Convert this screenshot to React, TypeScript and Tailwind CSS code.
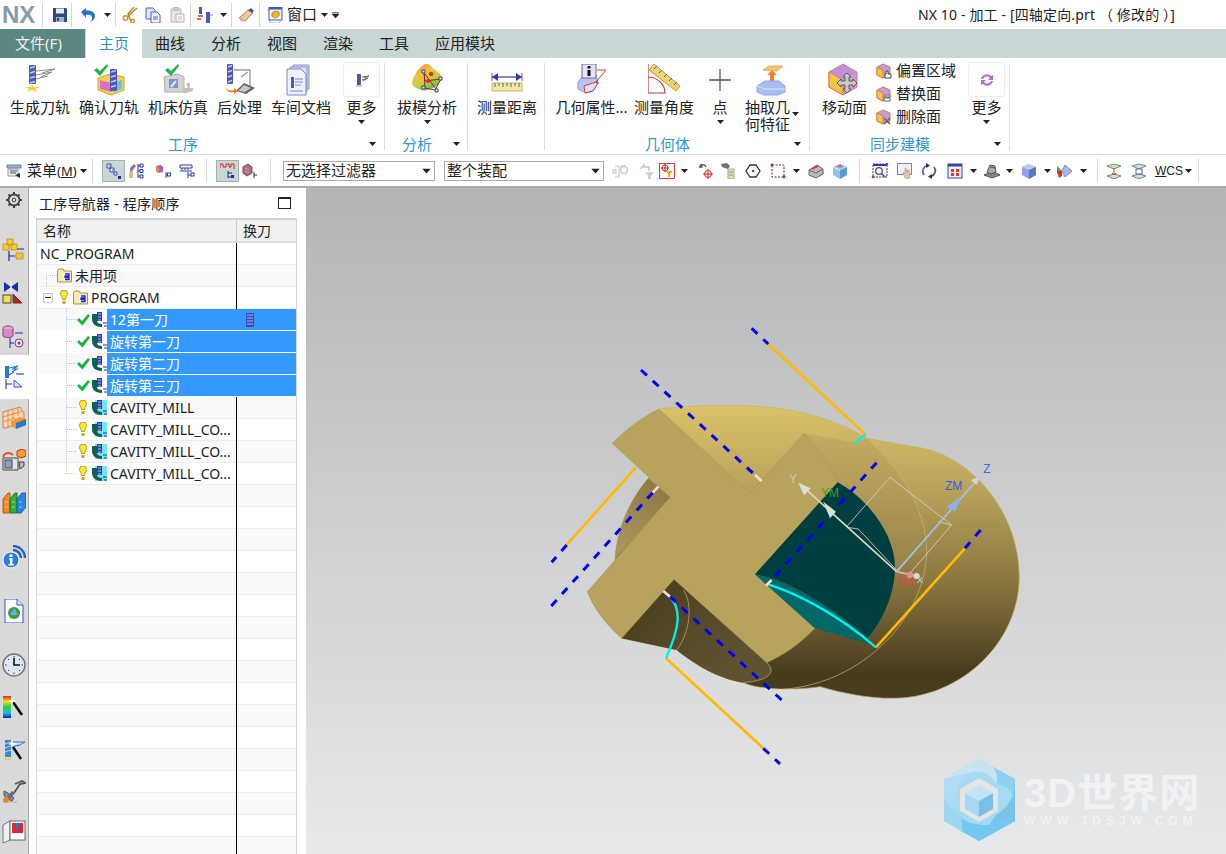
import type { ReactNode } from "react";

const Caret = ({ className = "" }: { className?: string }) => (
  <svg width="7" height="4" viewBox="0 0 7 4" className={"shrink-0 " + className}>
    <path d="M0 0h7L3.5 4z" fill="#222" />
  </svg>
);

const Sep = ({ className = "" }: { className?: string }) => (
  <div className={"w-px h-[24px] bg-[#d6d6d6] shrink-0 " + className} />
);

const S = ({ children }: { children: ReactNode }) => (
  <svg width="16" height="16" viewBox="0 0 16 16" className="shrink-0 block">
    {children}
  </svg>
);

const R = ({ children }: { children: ReactNode }) => (
  <svg width="32" height="32" viewBox="0 0 32 32" className="shrink-0">
    {children}
  </svg>
);

const L = ({ children }: { children: ReactNode }) => (
  <svg width="24" height="24" viewBox="0 0 24 24" className="shrink-0 block">
    {children}
  </svg>
);

// end mill, used all over the ribbon
const Bit = ({ x, y, w = 7, h = 20 }: { x: number; y: number; w?: number; h?: number }) => (
  <g>
    <rect x={x} y={y} width={w} height={h} rx="1" fill="#4d57c0" />
    <path d={`M${x + 1} ${y + 3}l${w - 2} -1.5M${x + 1} ${y + 8}l${w - 2} -1.5M${x + 1} ${y + 13}l${w - 2} -1.5M${x + 1} ${y + 18}l${w - 2} -1.5`} stroke="#c4cbf2" strokeWidth="1.4" />
  </g>
);

const Check = ({ x = 0, y = 0 }: { x?: number; y?: number }) => (
  <path transform={`translate(${x} ${y})`} d="M0 6l3-2 3 3 7-7 1 2-8 10z" fill="#22b34a" />
);

// ribbon icons
const GenPath = () => (
  <R>
    <Bit x={5} y={1} w={7} h={19} />
    <path d="M12 7L31 5 18 9M12 11L28 8 17 13M12 15L24 12" stroke="#8c8c8c" fill="none" />
    <path d="M8 20l1.500 3 6 0-4 2 1.500 3-5-2-5 2 2-3-4-2h6z" fill="#f2d23c" />
  </R>
);
const Confirm = () => (
  <R>
    <path d="M5 14l12-4 14 3v13l-13 5-13-5z" fill="#f2d24a" stroke="#c9a93a" />
    <path d="M7 16l11 3v9l-11-3z" fill="#e06fc0" />
    <path d="M20 19l9-3v9l-9 3z" fill="#6ac0e8" />
    <Bit x={17} y={5} w={7} h={22} />
    <Check x={1} y={0} />
  </R>
);
const Machine = () => (
  <R>
    <path d="M2 13l14-3 6 3v15H3z" fill="#d3d3cf" stroke="#b0b0ac" />
    <rect x="7" y="15" width="9" height="9" fill="#7f93d2" />
    <path d="M9 23l5-6" stroke="#dfe6fa" strokeWidth="2" />
    <path d="M22 24h9v3l-7 2h-2zM24 19h4v5h-2z" fill="#c0c0bc" />
    <Check x={3} y={0} />
  </R>
);
const Post = () => (
  <R>
    <Bit x={3} y={0} w={6} h={20} />
    <path d="M10 6h16v16M24 8l-7 5" stroke="#9b9b9b" fill="none" strokeWidth="1.4" />
    <path d="M12 27l8-8 11 5-9 6z" fill="#5c6068" />
    <path d="M14 27l6-6 7 3-6 4z" fill="#c9c9c9" />
    <path d="M1 23c2 4 6 4 9 3v-2l4 3-4 3v-2c-4 1-8-1-9-5z" fill="#f0782a" />
  </R>
);
const Doc = () => (
  <R>
    <path d="M8 1h16v24H8z" fill="#cfd3f0" stroke="#8d94cc" />
    <path d="M5 3h17v25H5z" fill="#dfe2f6" stroke="#8d94cc" />
    <path d="M2 5h14l5 5v21H2z" fill="#eef0fb" stroke="#7e86c4" />
    <rect x="6" y="13" width="3" height="11" fill="#4d57c0" />
    <path d="M10 15h8M10 18h8M10 21h6M5 27h13" stroke="#7e86c4" />
  </R>
);
const MoreTool = () => (
  <svg width="16" height="16" viewBox="0 0 16 16">
    <rect x="3" y="2" width="4" height="11" fill="#555b84" />
    <path d="M8 5l7-1-5 2M8 8l6-2-5 3" stroke="#666" fill="none" />
    <path d="M2 14h6" stroke="#999" />
  </svg>
);
const Draft = () => (
  <R>
    <defs>
      <linearGradient id="draftg" x1="0.2" y1="0" x2="0.8" y2="1">
        <stop offset="0" stopColor="#f08a3a" />
        <stop offset="0.3" stopColor="#f0c23c" />
        <stop offset="0.6" stopColor="#c8d040" />
        <stop offset="1" stopColor="#3fb54a" />
      </linearGradient>
    </defs>
    <path d="M14 0c5-1 6 3 10 6 4 3 7 4 6 9-1 4-4 7-8 9-4 2-8 3-12 2C5 24 1 22 1 19 2 12 8 3 14 0z" fill="url(#draftg)" />
    <path d="M13 8l1 16 10 2 6-11-16 2-1-9zM14 10l11 15" stroke="#a0202c" fill="none" />
    <circle cx="20" cy="10" r="2.200" fill="#e02b2b" />
    <circle cx="17" cy="17" r="2" fill="#e02b2b" />
    <path d="M11 6h3v3h-3zM28 13h3v3h-3zM11 22h3v3h-3zM24 25h3v3h-3z" fill="#f6ef9c" stroke="#4a3a8c" />
  </R>
);
const Distance = () => (
  <R>
    <path d="M1 9v8M31 9v8" stroke="#c23a3a" />
    <path d="M1 13h30" stroke="#2f3aa8" strokeWidth="1.2" />
    <path d="M1 13l6-4v8zM31 13l-6-4v8z" fill="#2f3aa8" />
    <rect x="1" y="19" width="30" height="8" fill="#f4e7a0" stroke="#c9b95e" />
    <path d="M4 19v4M8 19v3M12 19v4M16 19v3M20 19v4M24 19v3M28 19v4" stroke="#5558b8" />
  </R>
);
const GeoInfo = () => (
  <R>
    <path d="M2 18l6-7h12l2 8-5 8-7 2-8-4z" fill="#b8c6ef" stroke="#8d9fd6" />
    <path d="M8 22l12-4 2 1-5 8-8 2z" fill="#d9e2fa" stroke="#d23a3a" />
    <rect x="6" y="0" width="14" height="14" fill="#e4e4f4" stroke="#6a6aa0" />
    <rect x="11.5" y="2" width="3" height="2.5" fill="#111" />
    <rect x="11.5" y="6" width="3" height="6" fill="#111" />
    <path d="M21 6h9l-10 12M22 16l-2 3 3 0" stroke="#d23a3a" fill="none" />
  </R>
);
const Angle = () => (
  <R>
    <path d="M6 0l26 22-4 5L1 6l3-4z" fill="#eed66c" stroke="#b79a3a" />
    <path d="M6 5l3-3M11 9l3-3M16 13l3-3M21 17l3-3M26 21l3-3" stroke="#4d57c0" />
    <path d="M0 0v29h17c0-9-8-16-17-16" stroke="#b84040" fill="none" strokeWidth="1.2" />
  </R>
);
const Plus = () => (
  <svg width="24" height="24" viewBox="0 0 24 24" className="shrink-0">
    <path d="M12 1v22M1 12h22" stroke="#555" strokeWidth="1.3" />
  </svg>
);
const Extract = () => (
  <R>
    <path d="M7 6l6-4h14l-6 5z" fill="#f5c67a" stroke="#e0b260" />
    <path d="M14 18v-7h-3l5-5 5 5h-3v7z" fill="#f0832a" />
    <path d="M1 22l8-5h14l6 5v6l-7 3H8l-7-3z" fill="#a9bdf2" stroke="#8fa5e0" />
    <path d="M1 22l8 3h20" stroke="#dce6ff" fill="none" />
  </R>
);
const MoveFace = () => (
  <svg width="34" height="34" viewBox="0 0 34 34" className="shrink-0">
    <path d="M15 1l14 8v15L15 32 1 24V9z" fill="#c79ad9" stroke="#e8734a" />
    <path d="M1 9l14 8v15L1 24z" fill="#f3c742" stroke="#e8734a" />
    <path d="M15 1l14 8-14 8L1 9z" fill="#c08fd8" />
    <path d="M19 10l4 4h-2v4h4v-2l4 4-4 4v-2h-4v4h2l-4 4-4-4h2v-4h-4v2l-4-4 4-4v2h4v-4h-2z" fill="#c9c9c9" stroke="#5a5a5a" />
  </svg>
);
const SmallFace = ({ kind }: { kind: number }) => (
  <S>
    <path d="M7 1l7 3v8l-7 3-6-3V4z" fill="#c79ad9" stroke="#d87a50" />
    <path d="M1 4l6 3v8l-6-3z" fill="#f3c742" stroke="#d87a50" />
    {kind === 0 && <path d="M10 8h2v3h3v4H9v-4h1z" fill="#fff" stroke="#444" />}
    {kind === 1 && <path d="M9 9h5v2H9zM8 12h6v3H8z" fill="#fff" stroke="#666" />}
    {kind === 2 && <path d="M8 9l6 6M14 9l-6 6" stroke="#666" strokeWidth="1.6" />}
  </S>
);
const Sync = () => (
  <svg width="16" height="16" viewBox="0 0 16 16">
    <path d="M2 7a6 6 0 0 1 10-3l2-1v5H9l2-2a4 4 0 0 0-7 1z" fill="#b26bd0" />
    <path d="M14 9a6 6 0 0 1-10 3l-2 1V8h5l-2 2a4 4 0 0 0 7-1z" fill="#b26bd0" />
  </svg>
);

// small toolbar icons
const Save = () => (
  <S>
    <path d="M1 1h13l1 1v13H1z" fill="#2d4a7c" />
    <rect x="4" y="1.5" width="8" height="5" fill="#e6edf7" />
    <rect x="4" y="10" width="8" height="5" fill="#9db2d4" />
    <rect x="5" y="11" width="2" height="3" fill="#2d4a7c" />
  </S>
);
const Undo = () => (
  <S>
    <path d="M1 5l5-4v2.500c5-.5 9 1.500 9 5.500 0 3-2 5-5 6 2-1.500 2.500-3 2-5-.6-2-3-2.500-6-2.200V11z" fill="#2670d2" />
  </S>
);
const Scissors = () => (
  <S>
    <path d="M15 1L5 10M12 0L6 7 9 14" stroke="#b08a2a" strokeWidth="1.5" fill="none" />
    <circle cx="3.5" cy="11" r="2.3" fill="none" stroke="#c69a2a" strokeWidth="1.5" />
    <circle cx="10.5" cy="14" r="1.8" fill="none" stroke="#c69a2a" strokeWidth="1.5" />
  </S>
);
const Copy = () => (
  <S>
    <path d="M1 1h7l2 2v9H1z" fill="#dfe6fa" stroke="#4e62b8" />
    <path d="M6 5h6l3 3v8H6z" fill="#f1f4ff" stroke="#4e62b8" />
    <path d="M8 10h5M8 12h5" stroke="#4e62b8" />
  </S>
);
const Paste = () => (
  <S>
    <path d="M2 2h10v13H2z" fill="#e6e6e6" stroke="#b8b8b8" />
    <rect x="5" y="0.5" width="4" height="3" fill="#d0d0d0" stroke="#b8b8b8" />
    <path d="M7 7h8v8H7z" fill="#f4f4f4" stroke="#b8b8b8" />
    <path d="M9 10h4M9 12h4" stroke="#c4c4c4" />
  </S>
);
const ToolTree = () => (
  <S>
    <rect x="2" y="0" width="3" height="7" fill="#4d57c0" />
    <path d="M1 9h5M0 12l4 0" stroke="#d33" strokeWidth="1.5" />
    <rect x="9" y="5" width="4" height="11" fill="#4d57c0" />
    <path d="M13 8h3" stroke="#888" />
  </S>
);
const Pencil = () => (
  <S>
    <path d="M1 11l9-8 5 3-8 8z" fill="#e9c79a" stroke="#a98a62" />
    <path d="M10 3l3-2 3 3-2 2z" fill="#3d4fb0" />
    <path d="M1 11l2 4 4-1z" fill="#d9b9d6" />
  </S>
);
const Win = () => (
  <S>
    <path d="M0 3h3v13h10v-2" stroke="#aaa" fill="none" />
    <rect x="2" y="0" width="13" height="13" fill="#eff3fb" stroke="#3a5dc0" />
    <path d="M2 0h13v2.500H2z" fill="#3a5dc0" />
    <path d="M5 6l3-2 4 1v4l-4 2-3-2z" fill="#f3b72e" stroke="#c98a20" />
  </S>
);
const MenuIc = () => (
  <S>
    <path d="M1 2h14v3H1z" fill="#9db4d8" stroke="#6c7fa6" />
    <path d="M2 6h10v7H2z" fill="#f1f1f1" stroke="#9a9a9a" />
    <path d="M4 8h7M4 10h6" stroke="#555" />
    <path d="M9 12l5 3v-5z" fill="#333" />
  </S>
);
const NavA = () => (
  <S>
    <path d="M1 1h4v4H1zM4 5h4v4H4zM8 9h3v3H8z" fill="#e8ecfa" stroke="#3a4aa8" />
    <path d="M3 3h1M6 7h1" stroke="#3a4aa8" />
    <path d="M12 13h3v3h-3z" fill="#1b2a9c" />
  </S>
);
const NavB = () => (
  <S>
    <path d="M2 5l4-4 2 2-4 5-2 3z" fill="#8a70c4" />
    <path d="M1 10l4-3v8H1z" fill="#d0c08a" />
    <path d="M10 1v14M10 3h3M10 8h3M10 13h3" stroke="#2a3aa8" />
    <path d="M12 1h3v3h-3zM12 6.500h3v3h-3zM12 12h3v3h-3z" fill="#e8ecfa" stroke="#2a3aa8" />
  </S>
);
const NavC = () => (
  <S>
    <path d="M1 3l5-1 2 2v5l-5 1-2-2z" fill="#a85bd0" />
    <path d="M1 3l3 2v5l-3-2z" fill="#ef8a3a" />
    <path d="M11 9v6M11 12h4" stroke="#2a3aa8" />
    <rect x="12.5" y="10" width="3" height="3" fill="#fff" stroke="#2a3aa8" />
  </S>
);
const NavD = () => (
  <S>
    <path d="M1 2h12M1 2v3h12V2M3 5v2M6 5v2M9 5v2M1 8h12" stroke="#2f3aa8" fill="none" />
    <path d="M9 9v6M9 12h4" stroke="#2a3aa8" />
    <rect x="12" y="10" width="3" height="3" fill="#fff" stroke="#2a3aa8" />
  </S>
);
const NavE = () => (
  <S>
    <path d="M0 5V1h3v3h3V1h3v3h2V1h3v5" stroke="#d02020" fill="none" />
    <path d="M8 8v7M8 10h4M8 14h4" stroke="#1b2a9c" />
    <rect x="11" y="12" width="3" height="3" fill="#1b2a9c" />
  </S>
);
const NavF = () => (
  <S>
    <path d="M1 4l5-3 4 3v6l-5 3-4-3z" fill="#a9707a" stroke="#7b4d55" />
    <path d="M3 5l4 2M3 8l4 2" stroke="#e0a0b0" />
    <path d="M12 9v6M12 12h3" stroke="#333" />
  </S>
);
const G1 = () => (
  <S>
    <rect x="1" y="7" width="3" height="3" fill="none" stroke="#bbb" />
    <path d="M3 3h4v11H3M8 3h6" stroke="#c6c6c6" fill="none" />
    <circle cx="12" cy="7" r="3.5" fill="none" stroke="#c6c6c6" strokeWidth="1.5" />
  </S>
);
const G2 = () => (
  <S>
    <path d="M1 6l4-4v2h5v4" stroke="#c6c6c6" fill="none" strokeWidth="1.5" />
    <path d="M6 9h9l-3 4v3h-3v-3z" fill="#d4d4d4" />
  </S>
);
const G3 = () => (
  <S>
    <rect x="0.5" y="0.5" width="15" height="15" fill="#fff" stroke="#d43a4a" />
    <circle cx="6" cy="5" r="3" fill="none" stroke="#b52a2a" />
    <path d="M6 1v8M2 5h8" stroke="#b52a2a" />
    <path d="M7 8h7l-3 3v3H9v-3z" fill="#eaa724" />
  </S>
);
const T1 = () => (
  <S>
    <path d="M1 4c2-3 6-3 7 0M1 4l3 0-1-3" stroke="#55565a" fill="none" strokeWidth="1.3" />
    <circle cx="10" cy="11" r="3.5" fill="none" stroke="#c22" />
    <path d="M10 6v10M5 11h10" stroke="#c22" />
  </S>
);
const T2 = () => (
  <S>
    <path d="M1 1l6-1 3 3-2 3-6-2z" fill="#6e7078" />
    <path d="M8 6h6v10H8z" fill="#e6dfae" stroke="#a8a890" />
    <path d="M9 9h4M9 12h4" stroke="#7b86b8" />
  </S>
);
const T3 = () => (
  <S>
    <path d="M5 2h6l4 6-4 6H5L1 8z" fill="#fff" stroke="#333" strokeWidth="1.3" />
    <circle cx="8" cy="8" r="1.3" fill="#c22" />
  </S>
);
const T4 = () => (
  <S>
    <path d="M2 2h12v12H2z" fill="none" stroke="#333" strokeDasharray="2 1.5" />
    <circle cx="2" cy="2" r="1.4" fill="#c22" />
    <circle cx="14" cy="14" r="1.4" fill="#c22" />
  </S>
);
const T5 = () => (
  <S>
    <path d="M1 7l8-5 6 4v5l-7 4-7-3z" fill="#b9b9b9" stroke="#666" />
    <path d="M1 7l7 3 7-4" stroke="#666" fill="none" />
    <path d="M4 6l6-3" stroke="#d43a3a" strokeWidth="1.4" />
  </S>
);
const T6 = () => (
  <S>
    <path d="M8 1l7 3v8l-7 4-7-4V4z" fill="#8ec4ee" />
    <path d="M1 4l7 3 7-3" stroke="#e8f4ff" fill="none" />
    <path d="M8 7v9l7-4V4z" fill="#5a9ad4" />
    <path d="M8 1v4M5 3l6 0" stroke="#e04a4a" />
  </S>
);
const V1 = () => (
  <S>
    <rect x="1" y="1" width="14" height="13" fill="#f1f4fb" stroke="#2f3aa8" strokeDasharray="2 1" />
    <path d="M1 1h14v2H1z" fill="#2f3aa8" />
    <circle cx="7" cy="8" r="3.3" fill="none" stroke="#555" strokeWidth="1.3" />
    <path d="M9.5 10.5L13 14" stroke="#555" strokeWidth="1.5" />
    <circle cx="1" cy="14" r="1.3" fill="#d22" />
    <circle cx="15" cy="1" r="1.3" fill="#d22" />
  </S>
);
const V2 = () => (
  <S>
    <rect x="0.5" y="0.5" width="14" height="11" fill="#eef1f8" stroke="#7d86ac" />
    <path d="M8 15l-2-5 1-1 1 2V5l1 0 0 4 1-3 1 3 1-2 1 3-1 6z" fill="#e9c49a" stroke="#b08f68" strokeWidth="0.5" />
  </S>
);
const V3 = () => (
  <S>
    <path d="M3 12A6 6 0 0 1 6 2.500" stroke="#4a6ac8" fill="none" strokeWidth="1.8" />
    <path d="M13 4a6 6 0 0 1-3 9.500" stroke="#5a5a5a" fill="none" strokeWidth="1.8" />
    <path d="M5 0v5l4-2.500zM11 16v-5l-4 2.500z" fill="#333" />
  </S>
);
const V4 = () => (
  <S>
    <rect x="1" y="1" width="14" height="14" fill="#f0f0f4" stroke="#2f4aa8" />
    <path d="M1 1h14v2.500H1z" fill="#2f4aa8" />
    <path d="M4 6h3v3H4zM9 6h3v3H9zM4 10h3v3H4zM9 10h3v3H9z" fill="#d83a3a" />
  </S>
);
const V5 = () => (
  <S>
    <path d="M0 12l8-4 8 4-8 3z" fill="#888" stroke="#555" />
    <path d="M3 9l3-7 5 1 1 6-5 2z" fill="#a9a9a9" stroke="#555" />
    <path d="M6 4l5 1" stroke="#555" />
  </S>
);
const V6 = () => (
  <S>
    <path d="M8 1l7 3v8l-7 4-7-4V4z" fill="#8ea6e6" />
    <path d="M1 4l7 3 7-3-7-3z" fill="#bccbf2" />
    <path d="M8 7v9l7-4V4z" fill="#5a76c4" />
  </S>
);
const V7 = () => (
  <S>
    <path d="M8 2l7 6-7 6-3-6z" fill="#aab6e4" stroke="#7d8ac4" />
    <path d="M0 3l5 5-5 3z" fill="#2bab4a" />
    <path d="M0 8l5 0v5l-3 2z" fill="#d43030" />
  </S>
);
const W1 = () => (
  <S>
    <path d="M1 3l7-2 7 2-7 3zM1 13l7-2 7 2-7 3z" fill="#cfe2c8" stroke="#6f8f6a" />
    <path d="M8 5v7M6 10l2 2 2-2" stroke="#d23a3a" fill="none" />
  </S>
);
const W2 = () => (
  <S>
    <path d="M1 3l7-2 7 2-7 3zM1 13l7-2 7 2-7 3z" fill="#cfe2d8" stroke="#6f8f80" />
    <rect x="5" y="6" width="6" height="5" fill="#fff" stroke="#4a6a90" />
  </S>
);

// side rail icons
const Rail = {
  gear: (
    <L>
      <circle cx="12" cy="12" r="5.5" fill="none" stroke="#444" strokeWidth="1.8" />
      <circle cx="12" cy="12" r="1.8" fill="none" stroke="#444" />
      <path d="M12 4v3M12 17v3M4 12h3M17 12h3M6.500 6.500l2 2M15.500 15.500l2 2M6.500 17.500l2-2M15.500 8.500l2-2" stroke="#444" strokeWidth="2" />
    </L>
  ),
  geo: (
    <L>
      <path d="M5 1h6v6H5zM1 6h6v6H1zM9 6h6v6H9z" fill="#f3cc3c" stroke="#c69a20" />
      <path d="M15 11h7M7 13v10M7 18h6" stroke="#1b2a9c" strokeWidth="1.2" />
      <path d="M14 15h7v6h-7z" fill="#f3c23c" stroke="#c69a20" />
    </L>
  ),
  tool: (
    <L>
      <path d="M2 1l7 5 7-5v10L9 6l-7 5z" fill="#1b2ab8" />
      <path d="M9 0v11" stroke="#fff" />
      <rect x="1" y="14" width="8" height="8" fill="#f3e14a" stroke="#444" />
      <path d="M11 22V13l9 9z" fill="#c41a1a" stroke="#444" />
    </L>
  ),
  db: (
    <L>
      <ellipse cx="6" cy="3.500" rx="5" ry="2.500" fill="#e8a6d2" stroke="#8c3a7a" />
      <path d="M1 4v7c1 2 9 2 10 0V4" fill="#d88ac4" stroke="#8c3a7a" />
      <path d="M13 8h8M8 13v10M8 18h4" stroke="#1b2a9c" />
      <circle cx="17" cy="18" r="4" fill="#f8e6ee" stroke="#8c3a7a" />
      <circle cx="17" cy="18" r="1.5" fill="#8c3a7a" />
    </L>
  ),
  ops: (
    <L>
      <rect x="3" y="1" width="4" height="12" fill="#2a75d8" />
      <path d="M7 3l9-2-5 3 4 0-5 3M7 10l5-3" stroke="#2a75d8" fill="none" strokeWidth="1.2" />
      <path d="M14 9h8M4 14v10M4 19h6" stroke="#1b2a9c" />
      <path d="M12 15v7h8z" fill="#dfe9ff" stroke="#2a5ac8" />
    </L>
  ),
  table: (
    <L>
      <path d="M1 6l17-5 4 6v8L4 22H1z" fill="#f5d6b8" stroke="#c9834a" />
      <path d="M1 11l20-6M1 16l12-4M6 4v17M11 3v10M16 2v8" stroke="#e88a4a" />
      <path d="M9 15l9-4 6 2v6l-10 4-5-3z" fill="#f09a2a" />
      <path d="M14 17l10-4v6l-10 4z" fill="#2a75d8" />
    </L>
  ),
  machine: (
    <L>
      <path d="M1 9h15v12H1z" fill="#e4e4e4" stroke="#444" />
      <rect x="3" y="11" width="7" height="8" fill="#8ea0c8" stroke="#444" />
      <path d="M17 13h5v4l-4 3z" fill="#bbb" stroke="#444" />
      <path d="M1 8C3 3 8 3 11 6" stroke="#e0562a" fill="none" strokeWidth="2" />
      <path d="M15 2l5-2 4 2v5l-5 2-4-2z" fill="#f3a02a" stroke="#c42a1a" />
    </L>
  ),
  books: (
    <L>
      <path d="M1 8l5-6h2v20H1z" fill="#f08a2a" stroke="#b85a10" />
      <path d="M8 8l5-6h2v20H8z" fill="#2fb03a" stroke="#1a7a24" />
      <path d="M15 8l5-6h4v14l-5 6h-4z" fill="#2a86e0" stroke="#1a5ab0" />
      <path d="M3 11h3M10 11h3M17 11h3M3 16h3M10 16h3M17 16h3" stroke="#fff" opacity="0.5" />
    </L>
  ),
  info: (
    <L>
      <path d="M11 1a12 12 0 0 1 12 12M11 5a8 8 0 0 1 8 8" stroke="#2a5ac8" fill="none" strokeWidth="2.4" />
      <circle cx="9" cy="15" r="8" fill="#2a7ee0" stroke="#fff" />
      <rect x="7.5" y="9.5" width="3" height="2.5" fill="#fff" />
      <path d="M7 13h3.500v6H12v1.500H6.500V19H8v-4.500H7z" fill="#fff" />
    </L>
  ),
  page: (
    <L>
      <path d="M3 0h12l6 6v18H3z" fill="#fff" stroke="#2a5ac8" />
      <path d="M15 0v6h6" fill="#dfe8fb" stroke="#2a5ac8" />
      <circle cx="12" cy="14" r="6" fill="#3f9a3f" />
      <path d="M12 9l4 7H8z" fill="#6ab0e8" />
    </L>
  ),
  clock: (
    <L>
      <circle cx="12" cy="12" r="11" fill="#dfe7f6" stroke="#777" strokeWidth="1.5" />
      <path d="M12 3v1.500M12 19.500v1.500M3 12h1.500M19.500 12h1.500M6 6l1 1M18 6l-1 1M6 18l1-1M18 18l-1-1" stroke="#333" />
      <path d="M12 5v7h6" stroke="#111" strokeWidth="1.6" fill="none" />
    </L>
  ),
  spectrum: (
    <L>
      <defs>
        <linearGradient id="specg" x1="0" y1="0" x2="0" y2="1">
          <stop offset="0" stopColor="#f02020" />
          <stop offset="0.25" stopColor="#f0e020" />
          <stop offset="0.5" stopColor="#20d040" />
          <stop offset="0.75" stopColor="#20c0e0" />
          <stop offset="1" stopColor="#1020d0" />
        </linearGradient>
      </defs>
      <rect x="1" y="1" width="8" height="22" fill="url(#specg)" />
      <path d="M11 7l9 13" stroke="#111" strokeWidth="2.6" />
      <path d="M10 1l1 4 4 1-4 1-1 3-1-3-3-1 3-1z" fill="#fff" />
    </L>
  ),
  wand: (
    <L>
      <rect x="3" y="2" width="6" height="17" fill="#3a86d8" />
      <path d="M3 6l6-2M3 10l6-2M3 14l6-2" stroke="#bcd6f6" />
      <path d="M9 4h14l-7 4M9 9l8-2" stroke="#2a75d8" fill="none" />
      <path d="M2 20h8l-2 2H3z" fill="#f2d23c" />
      <path d="M11 9l8 12" stroke="#111" strokeWidth="2.6" />
      <path d="M10 1l1 4 4 1-4 1-1 3-1-3-3-1 3-1z" fill="#fff" />
    </L>
  ),
  wrench: (
    <L>
      <path d="M13 4l7-3 3 2-5 1-6 9" stroke="#555" fill="none" strokeWidth="1.8" />
      <path d="M2 11l4 2 6 5-2 3-6-3-2-3z" fill="#8a8aa8" stroke="#555" />
      <path d="M10 11l3 2-5 6-3-2z" fill="#6a6a88" />
      <circle cx="4" cy="20" r="3" fill="#f0862a" />
      <path d="M6 22h9" stroke="#aaa" />
    </L>
  ),
  door: (
    <L>
      <path d="M1 5l7-4v19l-7 3z" fill="#f1f1f1" stroke="#777" />
      <rect x="8" y="1" width="15" height="19" fill="#fff" stroke="#666" />
      <rect x="10" y="3" width="11" height="10" fill="#d82a2a" />
      <path d="M13 3h5l-1 6h-3z" fill="#3a6ad0" />
    </L>
  ),
};

const RibbonItem = ({ icon, label, caret = false, box = false, className = "" }: { icon: ReactNode; label: ReactNode; caret?: boolean; box?: boolean; className?: string }) => (
  <div className={"flex flex-col items-center shrink-0 " + className}>
    {box ? (
      <div className="w-[37px] h-[35px] border border-[#ececec] rounded-[3px] flex items-center justify-center">{icon}</div>
    ) : (
      <div className="h-[35px] flex items-center justify-center">{icon}</div>
    )}
    <div className="h-[20px] leading-[20px] whitespace-nowrap">{label}</div>
    {caret && <Caret className="mt-[3px]" />}
  </div>
);

const GroupLabel = ({ text, className = "", caret = "" }: { text?: string; className?: string; caret?: string }) => (
  <div className="h-[20px] flex items-center">
    <span className={"text-[#2f97cc] leading-[20px] whitespace-nowrap " + className}>{text}</span>
    {caret && <Caret className={"ml-auto " + caret} />}
  </div>
);

const RibbonSep = () => <div className="w-px h-[87px] mt-[5px] bg-[#dcdcdc] shrink-0" />;

const Bulb = ({ className = "" }: { className?: string }) => (
  <svg width="8" height="15" viewBox="0 0 8 15" className={"shrink-0 " + className}>
    <path d="M0.5 3.500a3.500 3.500 0 0 1 7 0c0 2-1.800 3-2 6h-3c-.2-3-2-4-2-6z" fill="#fde93a" stroke="#b89a10" />
    <rect x="2.5" y="11" width="3" height="3" fill="#c9a81c" />
  </svg>
);
const FolderIc = () => (
  <svg width="15" height="15" viewBox="0 0 15 15" className="shrink-0 block">
    <path d="M0.5 3V14h14V3H7L6 1H1.500z" fill="#f8e9b0" stroke="#a8944c" />
    <path d="M6.500 5.500h6v7h-6" fill="#fff" />
    <path d="M8 6h4v2H8v1.500h4v2H8" stroke="#1c22e0" strokeWidth="1.3" fill="none" />
  </svg>
);
const CheckIc = () => (
  <svg width="13" height="12" viewBox="0 0 13 12" className="shrink-0 block">
    <path d="M0 6l2-2 3 3 6-7 2 1.500L5.500 11.500z" fill="#15b53a" />
  </svg>
);
const OpIc = ({ pending = false }: { pending?: boolean }) => (
  <svg width="15" height="15" viewBox="0 0 15 15" className="shrink-0 block">
    {pending && <rect x="3" y="0" width="12" height="15" fill="#6ee8f4" />}
    <path d="M0 2h5v7c0 2 2 3 5 3v3C4 15 0 12 0 7z" fill="#0f5f55" />
    <rect x="5" y="0" width="5" height="9" fill="#3138b8" />
    <path d="M6 2h3M6 5h3M6 8h3" stroke="#b8c0f0" />
    <path d="M11 11h4M12 14h3" stroke="#2030b0" />
  </svg>
);

// dotted elbow of the tree, runs the whole row unless it is the last child
const Stub = ({ last = false }: { last?: boolean }) => (
  <div className={"ml-[29px] w-[10px] shrink-0 border-l border-dotted border-[#bcc8d4] flex " + (last ? "h-[11px] self-start items-end" : "h-full items-center")}>
    <div className="w-full border-t border-dotted border-[#bcc8d4]" />
  </div>
);

const Row = ({ index, selected = false, children, right }: { index: number; selected?: boolean; children?: ReactNode; right?: ReactNode }) => (
  <div
    className={
      "h-[22px] flex shrink-0 " +
      (index % 2 === 0 ? "bg-white" : "bg-[#f9f9f9]") +
      (selected ? " border-b border-white" : " bg-[linear-gradient(to_top,#ececec_1px,transparent_1px)]")
    }
  >
    <div className={"w-[200px] shrink-0 flex items-center whitespace-nowrap overflow-hidden " + (selected ? "" : "pb-px border-r border-black")}>{children}</div>
    <div className={"flex-1 flex items-center " + (selected ? "bg-[#3399ff]" : "")}>{right}</div>
  </div>
);

const OpRow = ({ index, label, first = false }: { index: number; label: string; first?: boolean }) => (
  <Row
    index={index}
    selected
    right={
      first ? (
        <svg width="8" height="14" viewBox="0 0 8 14" className="ml-[9px]">
          <rect width="8" height="14" fill="#3f49b0" />
          <path d="M1 2h6M1 5h6M1 8h6M1 11h6" stroke="#aeb6ee" />
        </svg>
      ) : undefined
    }
  >
    <Stub />
    <div className="ml-px"><CheckIc /></div>
    <div className="ml-[2px]"><OpIc /></div>
    <div className="h-full flex-1 bg-[#3399ff] text-white pl-[3px] leading-[21px]">{label}</div>
  </Row>
);

const PendRow = ({ index, label, last = false }: { index: number; label: string; last?: boolean }) => (
  <Row index={index}>
    <Stub last={last} />
    <Bulb className="ml-[3px]" />
    <div className="ml-[5px]"><OpIc pending /></div>
    <div className="ml-[3px]">{label}</div>
  </Row>
);

const Part = () => (
  <svg width="920" height="666" viewBox="306 188 920 666" className="block">
    <defs>
      <linearGradient id="body" gradientUnits="userSpaceOnUse" x1="0" y1="285" x2="0" y2="1165">
        <stop offset="0" stopColor="#dcc26b" />
        <stop offset="0.3" stopColor="#b7a159" />
        <stop offset="0.6" stopColor="#8a7740" />
        <stop offset="0.92" stopColor="#463a1e" />
        <stop offset="1" stopColor="#4a3e22" />
      </linearGradient>
      <linearGradient id="slot" gradientUnits="userSpaceOnUse" x1="320" y1="860" x2="560" y2="1100">
        <stop offset="0" stopColor="#4a3e20" />
        <stop offset="1" stopColor="#5e5230" />
      </linearGradient>
      <linearGradient id="left" gradientUnits="userSpaceOnUse" x1="400" y1="540" x2="280" y2="700">
        <stop offset="0" stopColor="#8d7a45" />
        <stop offset="1" stopColor="#a8945a" />
      </linearGradient>
    </defs>
    <g transform="translate(530 310) scale(0.3333)">
      <path d="M387 297C500 285 650 280 760 297C850 310 950 345 1010 385L1180 415C1340 450 1468 620 1468 800C1468 1000 1290 1165 1090 1165C1010 1165 940 1150 870 1130C820 1138 700 1145 640 1118C560 1105 490 1060 440 1020L275 985L255 745C262 650 300 570 355 505Z" fill="url(#body)" stroke="#c9b060" strokeWidth="2" />
      <path d="M355 505L421 562L255 745C262 650 300 570 355 505Z" fill="url(#left)" />
      <path d="M822 370L975 398L1010 385C1110 470 1188 600 1190 720L1095 770L923 517Z" fill="#a48f55" opacity="0.3" />
      <path d="M275 985L432 808L710 1058C740 1085 720 1112 640 1118C560 1105 490 1060 440 1020Z" fill="url(#slot)" />
      <path d="M1010 385C1110 470 1188 600 1190 720C1190 920 1000 1120 760 1138" fill="none" stroke="#d2ba70" strokeWidth="2" />
      <path d="M710 1058C740 1085 720 1112 640 1118M440 1020C480 970 490 880 460 840" fill="none" stroke="#c9b370" strokeWidth="2" />
      <path d="M387 297L660 550L822 370C870 415 900 465 923 517L675 793L855 955C800 1010 760 1035 710 1058L432 808L275 985C230 945 190 895 172 845L421 562L247 400C290 355 340 320 387 297Z" fill="#b7a35c" stroke="#a8945a" strokeWidth="1.5" />
      <path d="M675 793L923 517C1020 570 1095 680 1095 770C1095 850 1060 930 1012 985C900 890 800 830 725 805Z" fill="#003f40" />
      <path d="M675 793L725 805C800 830 920 900 1012 985L1030 1005L855 955Z" fill="#006868" />

      <g fill="none">
        <path d="M715 102L1005 372M318 472L110 705M1038 1012L1305 715M408 1045L700 1315" stroke="#ffb900" strokeWidth="8" />
        <path d="M972 400L1008 373M710 822C800 850 920 910 1038 1012M420 860C455 900 450 950 408 1045" stroke="#00f0f0" strokeWidth="7" />
        <path d="M665 55L715 102M333 180L675 495M110 705L65 757M368 548L55 898M1040 458L725 810M1305 715L1352 660M420 860L760 1175M700 1315L750 1362" stroke="#0000f0" strokeWidth="9" strokeDasharray="24 24" />
        <path d="M675 495L695 513M385 530L368 548M725 810L708 827M400 843L420 860" stroke="#f8dcdc" strokeWidth="8" />
        <path d="M950 650L1080 502L1265 645L1140 790M1225 636L1265 645M950 652L985 657L1100 780" stroke="#d4d4d0" strokeWidth="2.5" />
        <path d="M810 522L1100 785" stroke="#d8d8c8" strokeWidth="5" />
        <path d="M1100 785L1350 500" stroke="#a9bfe9" strokeWidth="5" />
        <path d="M1100 785L1170 800" stroke="#e0b0b0" strokeWidth="5" />
      </g>
      <path d="M805 518L842 535L822 556Z" fill="#dcdcdc" />
      <path d="M880 575L918 605L900 625Z" fill="#d8e4c8" />
      <path d="M1295 558L1275 605L1250 590Z" fill="#8fb0ea" />
      <path d="M1350 500L1340 525L1322 510Z" fill="#d0d4da" />
      <circle cx="1140" cy="795" r="10" fill="#e89090" />
      <circle cx="1160" cy="798" r="9" fill="#d8d8d8" />
      <g fontFamily="'Liberation Sans', sans-serif" fontSize="36">
        <text x="778" y="520" fill="#c9c9c9">Y</text>
        <text x="873" y="562" fill="#3b9a3b">YM</text>
        <text x="1245" y="540" fill="#3a5ae0">ZM</text>
        <text x="1360" y="490" fill="#4a6ae8">Z</text>
        <text x="1100" y="828" fill="#d84a4a">XM</text>
        <text x="1160" y="818" fill="#d0d0d0" fontSize="28">X</text>
      </g>
    </g>
  </svg>
);

const WatermarkLogo = () => (
  <svg width="74" height="84" viewBox="0 0 74 84" className="shrink-0">
    <path d="M36 1L72 21V63L36 83L1 63V21Z" fill="#a6daf3" />
    <path d="M36 1L72 21L53 26C48 16 40 12 30 14L1 21Z" fill="#c8e3f2" />
    <path d="M50 9L72 21V43C70 33 62 26 53 26C55 20 54 14 50 9Z" fill="#8ed0f2" />
    <path d="M72 26V63L36 83L52 58C62 52 72 40 72 26Z" fill="#7cc3ea" />
    <path d="M72 63L36 83L16 72L18 60C30 68 50 70 58 62Z" fill="#74c8f2" />
    <path d="M1 21L28 15C22 18 16 26 14 34L1 64Z" fill="#b0dcf2" />
    <path d="M1 40C6 48 12 54 18 58L20 74L1 63Z" fill="#9ed6f2" />
    <path d="M36 20L55 31V53L36 64L17 53V31Z" fill="#e4e5e7" />
    <path d="M36 27L50 35L36 43L22 35Z" fill="#c4e3f4" />
    <path d="M22 35L36 43V59L22 51Z" fill="#a6d8f3" />
    <path d="M50 35L36 43V59L50 51Z" fill="#78c0ea" />
  </svg>
);

export default function App() {
  const rows = Array.from({ length: 19 }, (_, i) => i + 9);
  return (
    <div className="w-[1226px] h-[854px] overflow-hidden flex flex-col bg-white text-[15px] text-[#222] font-['Noto_Sans','Noto_Sans_CJK_SC',sans-serif]">
      {/* title bar */}
      <div className="h-[29px] shrink-0 flex items-center">
        <div className="w-[42px] pl-[2px] shrink-0 text-[24px] font-bold text-[#8a9aa6] font-['Liberation_Sans',sans-serif] leading-none">NX</div>
        <Sep />
        <div className="ml-[9px]"><Save /></div>
        <Sep className="ml-[3px]" />
        <div className="ml-[8px]"><Undo /></div>
        <Caret className="ml-[8px]" />
        <Sep className="ml-[4px]" />
        <div className="ml-[6px]"><Scissors /></div>
        <div className="ml-[7px]"><Copy /></div>
        <div className="ml-[8px]"><Paste /></div>
        <Sep className="ml-[5px]" />
        <div className="ml-[6px]"><ToolTree /></div>
        <Caret className="ml-[7px]" />
        <Sep className="ml-[4px]" />
        <div className="ml-[6px]"><Pencil /></div>
        <Sep className="ml-[5px]" />
        <div className="ml-[7px]"><Win /></div>
        <span className="ml-[4px] leading-none">窗口</span>
        <Caret className="ml-[4px]" />
        <svg width="7" height="6" viewBox="0 0 7 6" className="ml-[4px] shrink-0"><path d="M0 0.500h7M0 2h7L3.500 6z" stroke="#222" strokeWidth="0.6" fill="#222" /></svg>
        <span className="ml-auto mr-[51px] text-[14px] tracking-[0.15px] text-[#222] whitespace-nowrap">NX 10 - 加工 - [四轴定向.prt （ 修改的 ）]</span>
      </div>

      {/* tabs */}
      <div className="h-[29px] shrink-0 flex bg-[#c8d6d5] leading-[29px]">
        <div className="w-[85px] pr-[8px] text-center bg-[#5a8780] text-[#f0f0f0]">文件(F)</div>
        <div className="ml-px px-[13px] bg-white text-[#2a8fc9]">主页</div>
        <div className="px-[13px]">曲线</div>
        <div className="px-[13px]">分析</div>
        <div className="px-[13px]">视图</div>
        <div className="px-[13px]">渲染</div>
        <div className="px-[13px]">工具</div>
        <div className="px-[13px]">应用模块</div>
      </div>

      {/* ribbon */}
      <div className="h-[97px] shrink-0 flex border-b border-[#dedede]">
        <div className="w-[384px] shrink-0 flex flex-col">
          <div className="h-[76px] pt-[4px] pl-[10px] flex gap-[9px]">
            <RibbonItem icon={<GenPath />} label="生成刀轨" />
            <RibbonItem icon={<Confirm />} label="确认刀轨" />
            <RibbonItem icon={<Machine />} label="机床仿真" />
            <RibbonItem icon={<Post />} label="后处理" />
            <RibbonItem icon={<Doc />} label="车间文档" />
            <RibbonItem icon={<MoreTool />} label="更多" box caret className="ml-[3px]" />
          </div>
          <GroupLabel text="工序" className="ml-[168px]" caret="mr-[8px]" />
        </div>
        <RibbonSep />
        <div className="w-[82px] shrink-0 flex flex-col">
          <div className="h-[76px] pt-[4px] pl-[12px] flex">
            <RibbonItem icon={<Draft />} label="拔模分析" caret />
          </div>
          <GroupLabel text="分析" className="ml-[17px]" caret="mr-[7px]" />
        </div>
        <RibbonSep />
        <div className="w-[76px] shrink-0 flex flex-col">
          <div className="h-[76px] pt-[4px] pl-[9px] flex">
            <RibbonItem icon={<Distance />} label="测量距离" />
          </div>
        </div>
        <RibbonSep />
        <div className="w-[264px] shrink-0 flex flex-col">
          <div className="h-[76px] pt-[4px] pl-[12px] flex">
            <RibbonItem icon={<GeoInfo />} label="几何属性..." className="w-[69px]" />
            <RibbonItem icon={<Angle />} label="测量角度" className="ml-[8px]" />
            <RibbonItem icon={<Plus />} label="点" caret className="ml-[14px]" />
            <div className="ml-[13px] flex flex-col items-center shrink-0">
              <div className="h-[35px] flex items-center"><Extract /></div>
              <div className="leading-[17px] mt-[2px]">
                <div>抽取几</div>
                <div className="flex">何特征<Caret className="ml-[2px] mt-[-4px]" /></div>
              </div>
            </div>
          </div>
          <GroupLabel text="几何体" className="ml-[100px]" caret="mr-[8px]" />
        </div>
        <RibbonSep />
        <div className="w-[199px] shrink-0 flex flex-col">
          <div className="h-[76px] pt-[4px] pl-[12px] flex">
            <RibbonItem icon={<MoveFace />} label="移动面" />
            <div className="ml-[9px] mt-[-3px] w-[85px] shrink-0 flex flex-col leading-[23px]">
              <div className="flex items-center gap-[4px]"><SmallFace kind={0} />偏置区域</div>
              <div className="flex items-center gap-[4px]"><SmallFace kind={1} />替换面</div>
              <div className="flex items-center gap-[4px]"><SmallFace kind={2} />删除面</div>
            </div>
            <RibbonItem icon={<Sync />} label="更多" box caret className="ml-[7px]" />
          </div>
          <GroupLabel text="同步建模" className="ml-[60px]" caret="mr-[8px]" />
        </div>
        <RibbonSep />
      </div>

      {/* selection bar */}
      <div className="h-[33px] shrink-0 flex items-center border-b-2 border-[#a8a8a8]">
        <div className="ml-[6px]"><MenuIc /></div>
        <span className="ml-[5px] w-[50px] shrink-0 leading-none whitespace-nowrap">菜单<span className="text-[13px]">(<span className="underline">M</span>)</span></span>
        <Caret className="ml-[3px]" />
        <Sep className="ml-[5px]" />
        <div className="ml-[9px] w-[23px] h-[22px] bg-[#c8d6d5] border border-[#9fb3b1] flex items-center justify-center"><NavA /></div>
        <div className="ml-[3px]"><NavB /></div>
        <div className="ml-[11px]"><NavC /></div>
        <div className="ml-[8px]"><NavD /></div>
        <Sep className="ml-[11px]" />
        <div className="ml-[9px] w-[23px] h-[22px] bg-[#c8d6d5] border border-[#9fb3b1] flex items-center justify-center"><NavE /></div>
        <div className="ml-[3px]"><NavF /></div>
        <Sep className="ml-[12px]" />
        <div className="ml-[12px] w-[152px] h-[20px] border border-[#ababab] flex items-center pl-[2px] pr-[4px] leading-none">
          无选择过滤器<Caret className="ml-auto scale-125" />
        </div>
        <div className="ml-[9px] w-[160px] h-[20px] border border-[#ababab] flex items-center pl-[2px] pr-[4px] leading-none">
          整个装配<Caret className="ml-auto scale-125" />
        </div>
        <div className="ml-[8px]"><G1 /></div>
        <div className="ml-[11px]"><G2 /></div>
        <div className="ml-[4px]"><G3 /></div>
        <Caret className="ml-[6px]" />
        <div className="ml-[10px]"><T1 /></div>
        <div className="ml-[6px]"><T2 /></div>
        <div className="ml-[9px]"><T3 /></div>
        <div className="ml-[9px]"><T4 /></div>
        <Caret className="ml-[7px]" />
        <div className="ml-[8px]"><T5 /></div>
        <div className="ml-[8px]"><T6 /></div>
        <Sep className="ml-[11px]" />
        <div className="ml-[12px]"><V1 /></div>
        <div className="ml-[9px]"><V2 /></div>
        <div className="ml-[8px]"><V3 /></div>
        <div className="ml-[10px]"><V4 /></div>
        <Caret className="ml-[7px]" />
        <div className="ml-[7px]"><V5 /></div>
        <Caret className="ml-[6px]" />
        <div className="ml-[8px]"><V6 /></div>
        <Caret className="ml-[7px]" />
        <div className="ml-[6px]"><V7 /></div>
        <Caret className="ml-[7px]" />
        <Sep className="ml-[10px]" />
        <div className="ml-[8px]"><W1 /></div>
        <div className="ml-[9px]"><W2 /></div>
        <span className="ml-[8px] w-[27px] shrink-0 text-[12px] font-['Liberation_Sans',sans-serif] leading-none"><span className="underline">W</span>CS</span>
        <Caret className="ml-[3px]" />
        <Sep className="ml-[6px]" />
      </div>

      {/* workspace */}
      <div className="flex-1 min-h-0 flex">
        {/* side rail */}
        <div className="w-[29px] shrink-0 bg-[#d9d9d9] border-r border-[#a9a9a9] flex flex-col items-center">
          <div>{Rail.gear}</div>
          <div className="mt-[26px]">{Rail.geo}</div>
          <div className="mt-[19px]">{Rail.tool}</div>
          <div className="mt-[20px]">{Rail.db}</div>
          <div className="mt-[6px] w-[29px] h-[44px] bg-white flex items-center justify-center">{Rail.ops}</div>
          <div className="mt-[7px]">{Rail.table}</div>
          <div className="mt-[19px]">{Rail.machine}</div>
          <div className="mt-[18px]">{Rail.books}</div>
          <div className="mt-[30px]">{Rail.info}</div>
          <div className="mt-[30px]">{Rail.page}</div>
          <div className="mt-[30px]">{Rail.clock}</div>
          <div className="mt-[18px]">{Rail.spectrum}</div>
          <div className="mt-[19px]">{Rail.wand}</div>
          <div className="mt-[18px]">{Rail.wrench}</div>
          <div className="mt-[16px]">{Rail.door}</div>
        </div>

        {/* operation navigator */}
        <div className="w-[277px] shrink-0 flex flex-col pl-[7px] pr-[9px] text-[14px]">
          <div className="h-[30px] shrink-0 flex items-center pl-[3px]">
            <span className="whitespace-nowrap tracking-[0.25px]">工序导航器 - 程序顺序</span>
            <div className="ml-auto mr-[6px] w-[13px] h-[12px] border border-[#222] border-t-2" />
          </div>
          <div className="flex-1 min-h-0 border-x border-t-2 border-[#d4d4d4] flex flex-col overflow-hidden">
            <div className="h-[23px] shrink-0 flex bg-[#f0f0f0] border-b-2 border-[#dcdcdc] leading-[21px]">
              <div className="w-[200px] shrink-0 pl-[6px] border-r border-[#c8c8c8]">名称</div>
              <div className="pl-[6px]">换刀</div>
            </div>
            <Row index={0}><span className="ml-[3px]">NC_PROGRAM</span></Row>
            <Row index={1}>
              <div className="ml-[9px] w-[11px] h-[11px] self-end shrink-0 border-l border-t border-dotted border-[#bcc8d4]" />
              <FolderIc />
              <span className="ml-[3px]">未用项</span>
            </Row>
            <Row index={2}>
              <div className="ml-[6px] w-[10px] h-[10px] border border-[#c8c8c8] shrink-0 flex items-center justify-center">
                <div className="w-[6px] h-px bg-[#222]" />
              </div>
              <Bulb className="ml-[7px]" />
              <div className="ml-[5px]"><FolderIc /></div>
              <span className="ml-[3px]">PROGRAM</span>
            </Row>
            <OpRow index={3} label="12第一刀" first />
            <OpRow index={4} label="旋转第一刀" />
            <OpRow index={5} label="旋转第二刀" />
            <OpRow index={6} label="旋转第三刀" />
            <PendRow index={7} label="CAVITY_MILL" />
            <PendRow index={8} label="CAVITY_MILL_CO..." />
            <PendRow index={9} label="CAVITY_MILL_CO..." />
            <PendRow index={10} label="CAVITY_MILL_CO..." last />
            {rows.map((i) => (
              <Row key={i} index={i + 2} />
            ))}
          </div>
        </div>

        {/* graphics window */}
        <div className="relative flex-1 min-w-0 bg-gradient-to-b from-[#b4b5b7] to-[#e8e9ea]">
          <Part />
          <div className="absolute left-[637px] top-[570px] flex items-center gap-[7px]">
            <WatermarkLogo />
            <div className="flex flex-col">
              <span className="text-[40px] leading-[42px] font-bold text-[#f1f2f4] tracking-[1px] whitespace-nowrap font-['Liberation_Sans','Noto_Sans_CJK_SC',sans-serif]">3D世界网</span>
              <span className="text-[12px] leading-[14px] font-bold text-[#f1f2f4] tracking-[5px] whitespace-nowrap font-['Liberation_Sans',sans-serif]">WWW.3DSJW.COM</span>
            </div>
          </div>
        </div>
      </div>
    </div>
  );
}
